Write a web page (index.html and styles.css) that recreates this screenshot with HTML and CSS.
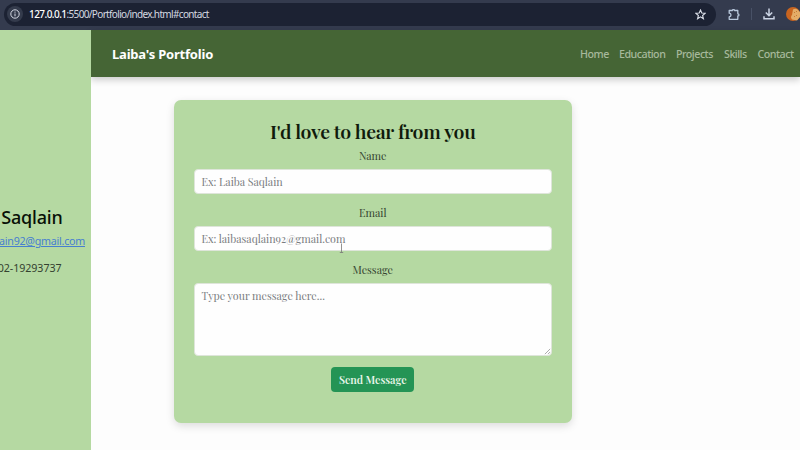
FILE: index.html
```html
<!DOCTYPE html>
<html lang="en">
<head>
<meta charset="utf-8">
<title>Laiba's Portfolio</title>
<link rel="stylesheet" href="styles.css">
</head>
<body>
<div class="toolbar">
  <div class="address">
    <span class="info"><svg width="10" height="10" viewBox="0 0 10 10" fill="none" stroke="#d5d9e4"><circle cx="5" cy="5" r="4.2"/><path d="M5 4.5v2.8M5 2.6v1.1"/></svg></span>
    <span class="url"><b>127.0.0.1</b>:5500/Portfolio/index.html#contact</span>
    <svg class="star" width="11" height="11" viewBox="0 0 11 11" fill="none" stroke="#dce0e9" stroke-width="1.1"><path d="M5.5 1l1.3 3 3.3.3-2.5 2.2.8 3.2-2.9-1.8-2.9 1.8.8-3.2L.9 4.3l3.3-.3z"/></svg>
  </div>
  <svg class="puzzle" width="12" height="13" viewBox="0 0 12 13" fill="none" stroke="#b9c9dd" stroke-width="1.3" stroke-linejoin="round"><path d="M1.200 2.500H4.200Q4.400 1.600 5.500 1.600T6.800 2.500H9.800V5.800Q11 6 11 6.900T9.800 8V11.300H1.200V8.800Q3 8.400 3 6.900T1.200 5.200z"/></svg>
  <span class="divider"></span>
  <svg class="download" width="12" height="12" viewBox="0 0 12 12" fill="none" stroke="#ccd5e5" stroke-width="1.5"><path d="M6 .5v7M2.800 4.500L6 7.700l3.200-3.200M1 8.300v2.500h10V8.300"/></svg>
  <svg class="avatar" width="14" height="14" viewBox="0 0 14 14"><circle cx="7" cy="7" r="7" fill="#c9641f"/><path d="M7 2.500Q9 .8 11.500 2.500L14 5v5l-3 3.500-5-1Q4 10 6 8z" fill="#e3ac67"/><path d="M8 5l1 1m1-2 1 1M8 9l1 1m1-2 1 1" stroke="#c77833"/></svg>
</div>
<div class="page">
  <aside class="sidebar">
    <h2><span>Laiba Saqlain</span></h2>
    <a class="mail">laibasaqlain92@gmail.com</a>
    <p>+92 302-19293737</p>
  </aside>
  <main>
    <nav>
      <strong class="brand">Laiba's Portfolio</strong>
      <div class="links"><a class="l1">Home</a><a class="l2">Education</a><a class="l3">Projects</a><a class="l4">Skills</a><a class="l5">Contact</a></div>
    </nav>
    <form class="card">
      <h1>I'd love to hear from you</h1>
      <label class="name">Name</label>
      <div class="field"><span class="t1">Ex: Laiba Saqlain</span></div>
      <label class="email">Email</label>
      <div class="field"><span class="t2">Ex: laibasaqlain92@gmail.com</span></div>
      <label class="message">Message</label>
      <div class="field area"><span class="t3">Type your message here...</span>
        <svg class="grip" width="7" height="7" viewBox="0 0 8 8" stroke="#888" stroke-width=".8"><path d="M1 7l6-6M4.500 7L7 4.500"/></svg>
      </div>
      <button type="button"><span>Send Message</span></button>
    </form>
  </main>
</div>
<svg class="cursor" width="5" height="10" viewBox="0 0 5 10" fill="none" stroke="#777" stroke-width=".8"><path d="M2.500.5v9M.8 9.500h3.400"/></svg>
</body>
</html>
```
FILE: styles.css
```css
* { box-sizing: border-box; }
body { margin: 0; width: 800px; height: 450px; overflow: hidden; background: #fdfdfd; font-family: "Noto Sans", sans-serif; font-size: 10.7px; }
h1, h2, p { margin: 0; }
svg { display: block; flex: none; }
.toolbar { height: 30px; background: #343b4e; display: flex; align-items: center; padding: 0 0 2px 4px; }
.address { width: 712px; height: 23px; border-radius: 12px; background: #1c2233; display: flex; align-items: center; padding: 0 10px 0 3px; flex: none; }
.info { width: 16px; height: 16px; border-radius: 50%; background: #343b4c; display: grid; place-items: center; }
.url { margin-left: 6px; color: #d5d8e0; font-size: 10px; letter-spacing: -.66px; white-space: nowrap; }
.url b { font-weight: 500; color: #fff; letter-spacing: -.55px; }
.star { margin-left: auto; }
.puzzle { margin-left: 12px; }
.divider { width: 1px; height: 12px; margin-left: 11px; background: #485166; flex: none; }
.download { margin-left: 11px; }
.avatar { margin-left: 11px; }
.page { display: flex; height: 420px; }
.sidebar { position: relative; z-index: 1; width: 90.5px; flex: none; overflow: hidden; background: #b5d9a2; padding-top: 174px; display: flex; flex-direction: column; align-items: flex-end; white-space: nowrap; color: #344230; }
.sidebar h2 { font-size: 18px; line-height: 27px; font-weight: 500; color: #081007; letter-spacing: -.2px; margin-right: 28px; }
.mail { color: #477fd0; text-decoration: underline; margin: 2px 5.500px 0 0; line-height: 16px; letter-spacing: -.25px; }
.sidebar p { line-height: 16px; margin: 11px 29px 0 0; letter-spacing: -.08px; }
main { flex: 1; }
nav { height: 47px; background: #456535; box-shadow: 0 3px 7px #0003; display: flex; align-items: center; padding: 1px 0 0 21.500px; }
.brand { color: #fff; font-size: 13px; letter-spacing: -.2px; width: 468px; }
.links { display: flex; gap: 11px; color: #a7b99c; white-space: nowrap; font-weight: 500; letter-spacing: -.5px; }
.l1 { width: 28px; } .l2 { width: 46px; } .l3 { width: 37px; } .l4 { width: 22.500px; }
.card { width: 398.500px; height: 323px; margin: 23px 0 0 83px; background: #b5d9a2; border-radius: 7px; padding: 20px; box-shadow: 0 3px 9px #0002; display: flex; flex-direction: column; align-items: center; font-family: "Playfair Display", "Liberation Serif", serif; }
h1 { font-size: 19.5px; font-weight: 600; line-height: 24px; color: #101b0c; white-space: nowrap; letter-spacing: -.33px; position: relative; top: -1px; }
label { color: #33422f; line-height: 16px; margin: 4px 0 5px; }
.field { width: 358.500px; height: 25px; border-radius: 4px; background: #fefefe; border: 1px solid #dee5da; color: #797c80; line-height: 24px; padding-left: 7px; white-space: nowrap; flex: none; }
.field + label { margin-top: 11.200px; }
.area { height: 73px; position: relative; }
.grip { position: absolute; right: 0; bottom: 0; }
button { width: 83px; height: 25.500px; margin-top: 10.500px; padding: 0 0 1px; border: 0; border-radius: 4px; background: #249455; color: #e8f6e9; font: 600 10.7px "Playfair Display", "Liberation Serif", serif; letter-spacing: -.04px; white-space: nowrap; }
.cursor { position: absolute; left: 339px; top: 243px; }
```
